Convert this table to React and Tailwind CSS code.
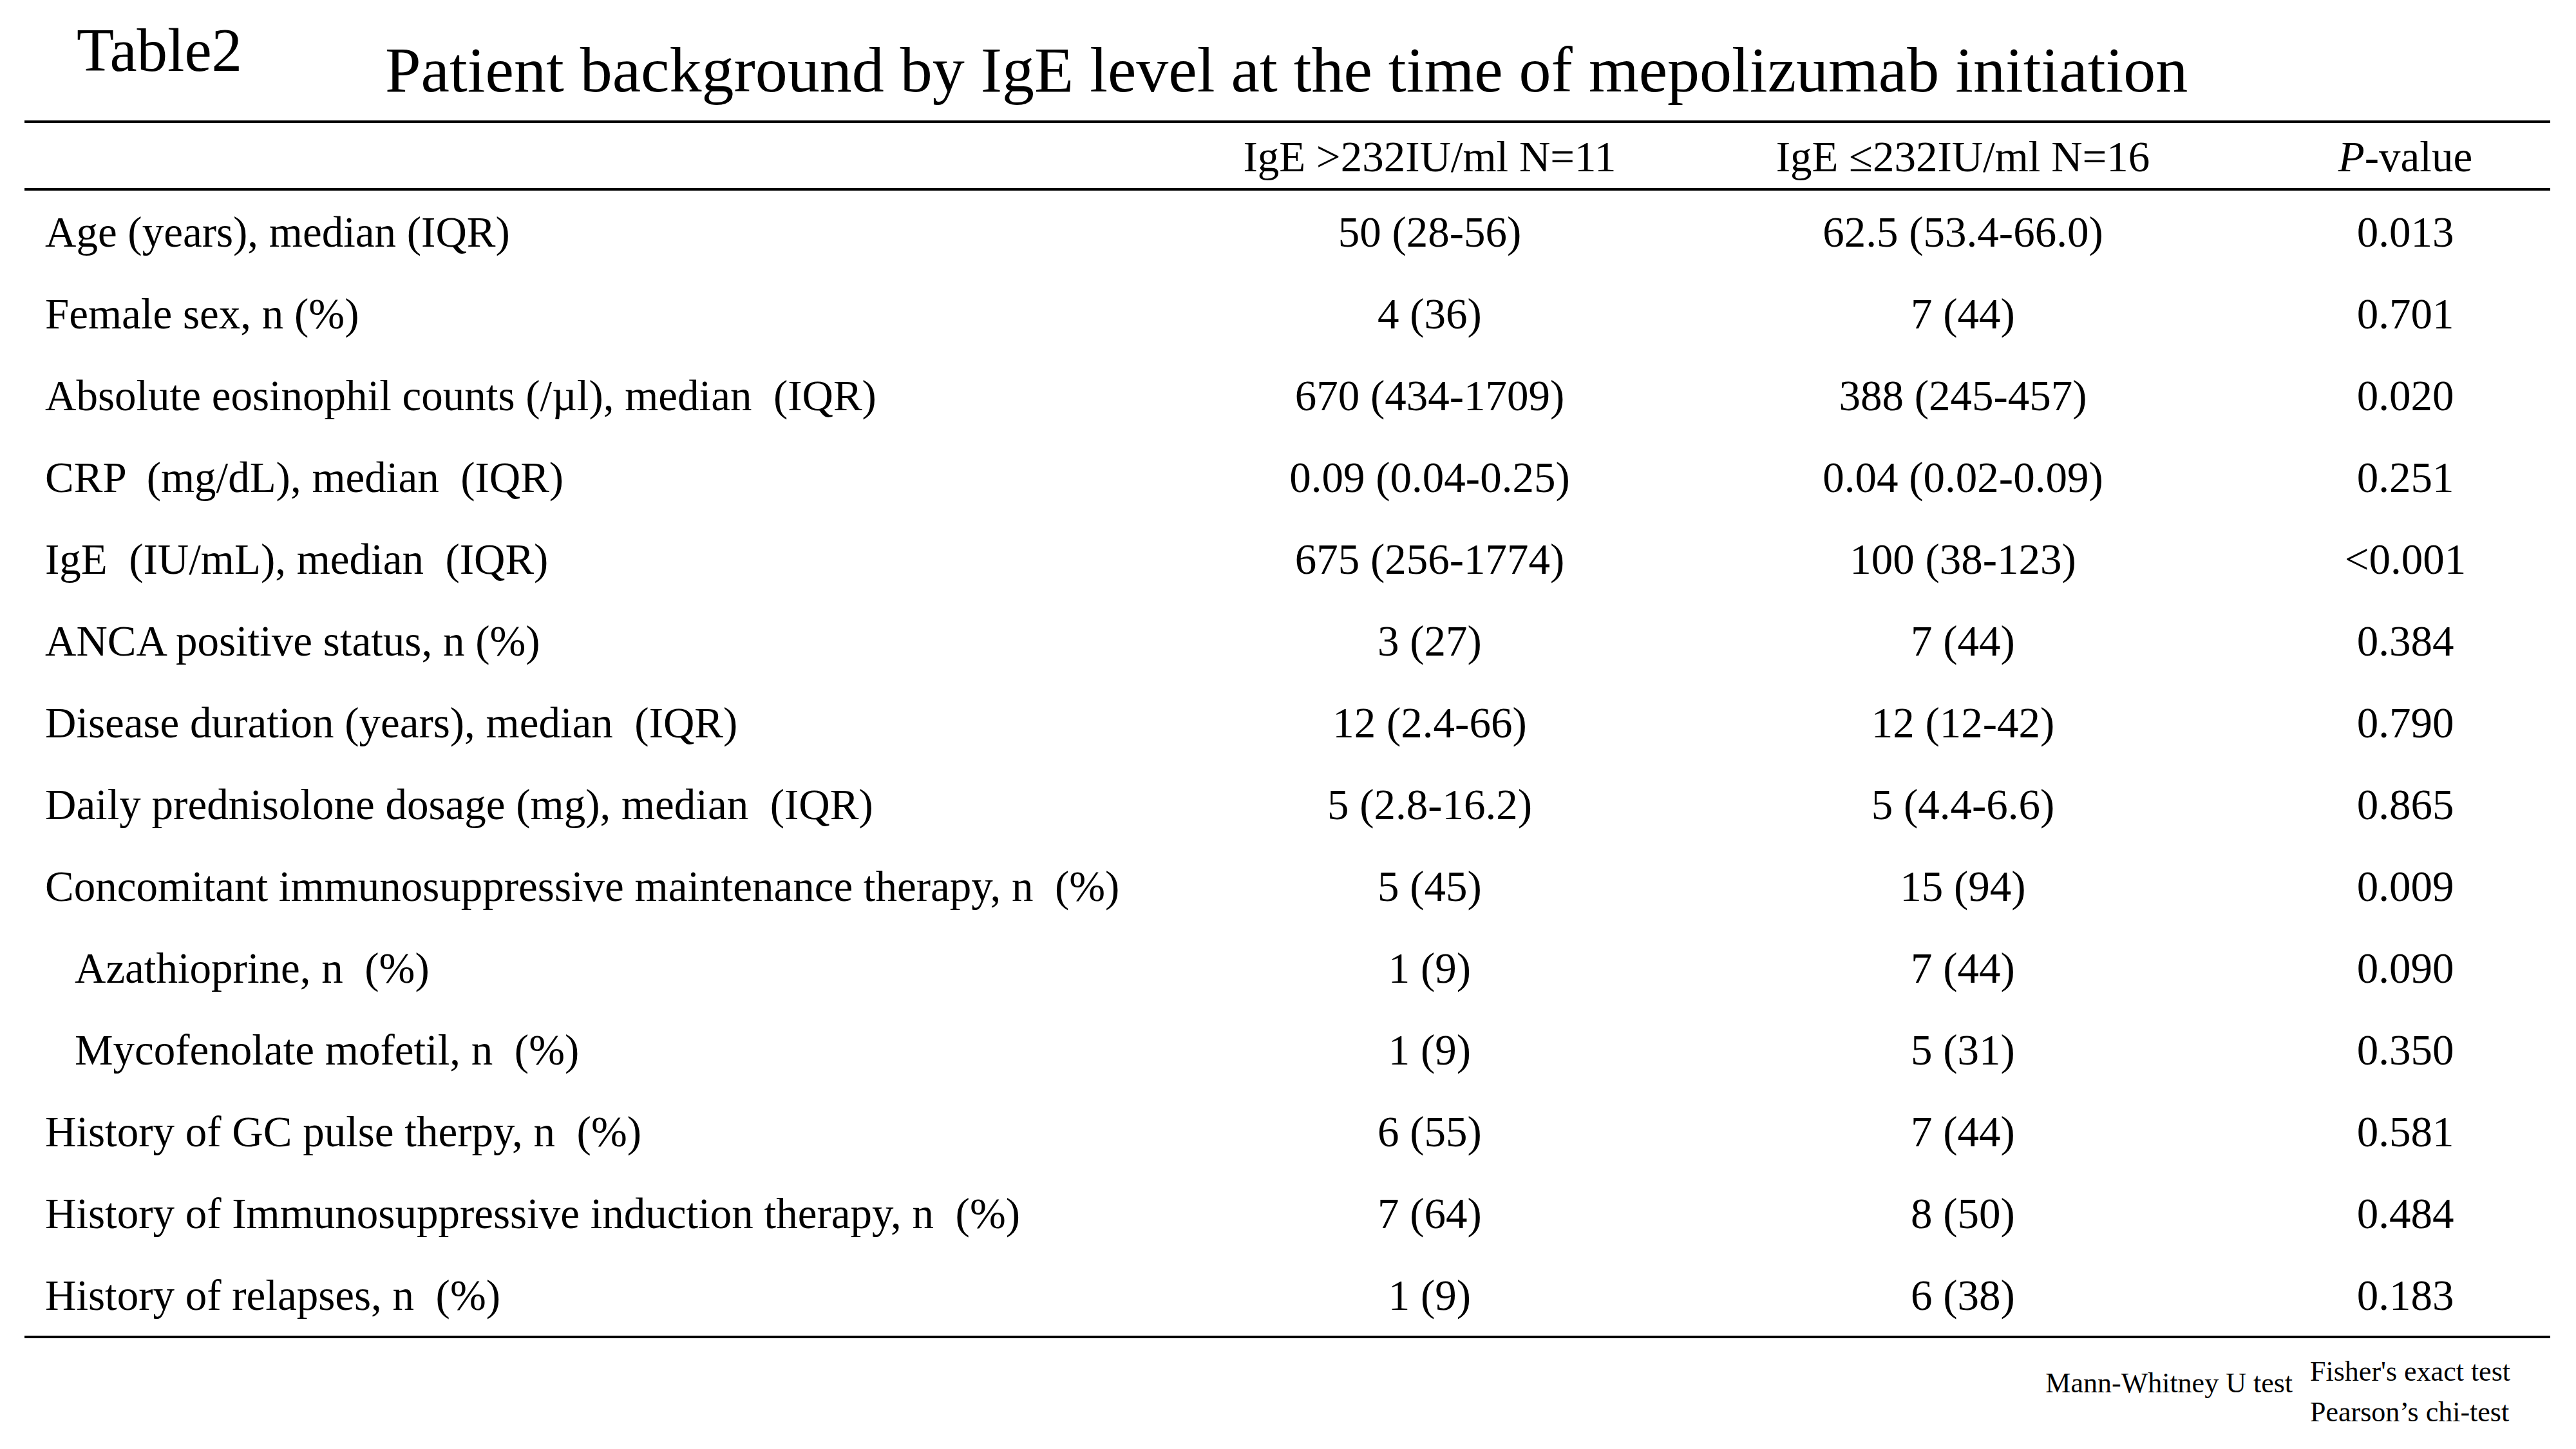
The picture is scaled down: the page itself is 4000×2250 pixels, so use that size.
const rows = [
  { label: 'Age (years), median (IQR)', a: '50 (28-56)', b: '62.5 (53.4-66.0)', p: '0.013' },
  { label: 'Female sex, n (%)', a: '4 (36)', b: '7 (44)', p: '0.701' },
  { label: 'Absolute eosinophil counts (/µl), median  (IQR)', a: '670 (434-1709)', b: '388 (245-457)', p: '0.020' },
  { label: 'CRP  (mg/dL), median  (IQR)', a: '0.09 (0.04-0.25)', b: '0.04 (0.02-0.09)', p: '0.251' },
  { label: 'IgE  (IU/mL), median  (IQR)', a: '675 (256-1774)', b: '100 (38-123)', p: '<0.001' },
  { label: 'ANCA positive status, n (%)', a: '3 (27)', b: '7 (44)', p: '0.384' },
  { label: 'Disease duration (years), median  (IQR)', a: '12 (2.4-66)', b: '12 (12-42)', p: '0.790' },
  { label: 'Daily prednisolone dosage (mg), median  (IQR)', a: '5 (2.8-16.2)', b: '5 (4.4-6.6)', p: '0.865' },
  { label: 'Concomitant immunosuppressive maintenance therapy, n  (%)', a: '5 (45)', b: '15 (94)', p: '0.009' },
  { label: 'Azathioprine, n  (%)', a: '1 (9)', b: '7 (44)', p: '0.090', sub: true },
  { label: 'Mycofenolate mofetil, n  (%)', a: '1 (9)', b: '5 (31)', p: '0.350', sub: true },
  { label: 'History of GC pulse therpy, n  (%)', a: '6 (55)', b: '7 (44)', p: '0.581' },
  { label: 'History of Immunosuppressive induction therapy, n  (%)', a: '7 (64)', b: '8 (50)', p: '0.484' },
  { label: 'History of relapses, n  (%)', a: '1 (9)', b: '6 (38)', p: '0.183' },
];

const cols = 'grid grid-cols-[1816px_732px_924px_450px]';

export default function App() {
  return (
    <div
      className="w-[4000px] h-[2250px] bg-white text-black"
      style={{ fontFamily: '"Liberation Serif", "Times New Roman", serif' }}
    >
      {/* heading */}
      <div className="h-[187px] flex items-start pl-[119px]">
        <div className="w-[479px] mt-[31px] text-[95px] leading-[95px]">Table2</div>
        <div className="mt-[59px] text-[100px] leading-[100px] whitespace-nowrap">
          Patient background by IgE level at the time of mepolizumab initiation
        </div>
      </div>

      {/* table */}
      <div className="ml-[38px] w-[3922px] border-t-[4px] border-b-[4px] border-black">
        <div className={`${cols} h-[105px] items-center text-[67px] leading-[105px] border-b-[4px] border-black`}>
          <div />
          <div className="text-center whitespace-nowrap">IgE &gt;232IU/ml N=11</div>
          <div className="text-center whitespace-nowrap">IgE ≤232IU/ml N=16</div>
          <div className="text-center whitespace-nowrap">
            <span className="italic">P</span>-value
          </div>
        </div>
        {rows.map((r) => (
          <div key={r.label} className={`${cols} h-[127px] text-[67px] leading-[129px]`}>
            <div className={`whitespace-pre ${r.sub ? 'pl-[78px]' : 'pl-[32px]'}`}>{r.label}</div>
            <div className="text-center whitespace-nowrap">{r.a}</div>
            <div className="text-center whitespace-nowrap">{r.b}</div>
            <div className="text-center whitespace-nowrap">{r.p}</div>
          </div>
        ))}
      </div>

      {/* test notes */}
      <div className="w-[3960px] flex justify-end items-start gap-[27px] pr-[62px] pt-[20px] text-[44px] leading-[63px]">
        <div className="mt-[18px] whitespace-nowrap">Mann-Whitney U test</div>
        <div className="whitespace-nowrap">
          <div>Fisher's exact test</div>
          <div>Pearson’s chi-test</div>
        </div>
      </div>
    </div>
  );
}
